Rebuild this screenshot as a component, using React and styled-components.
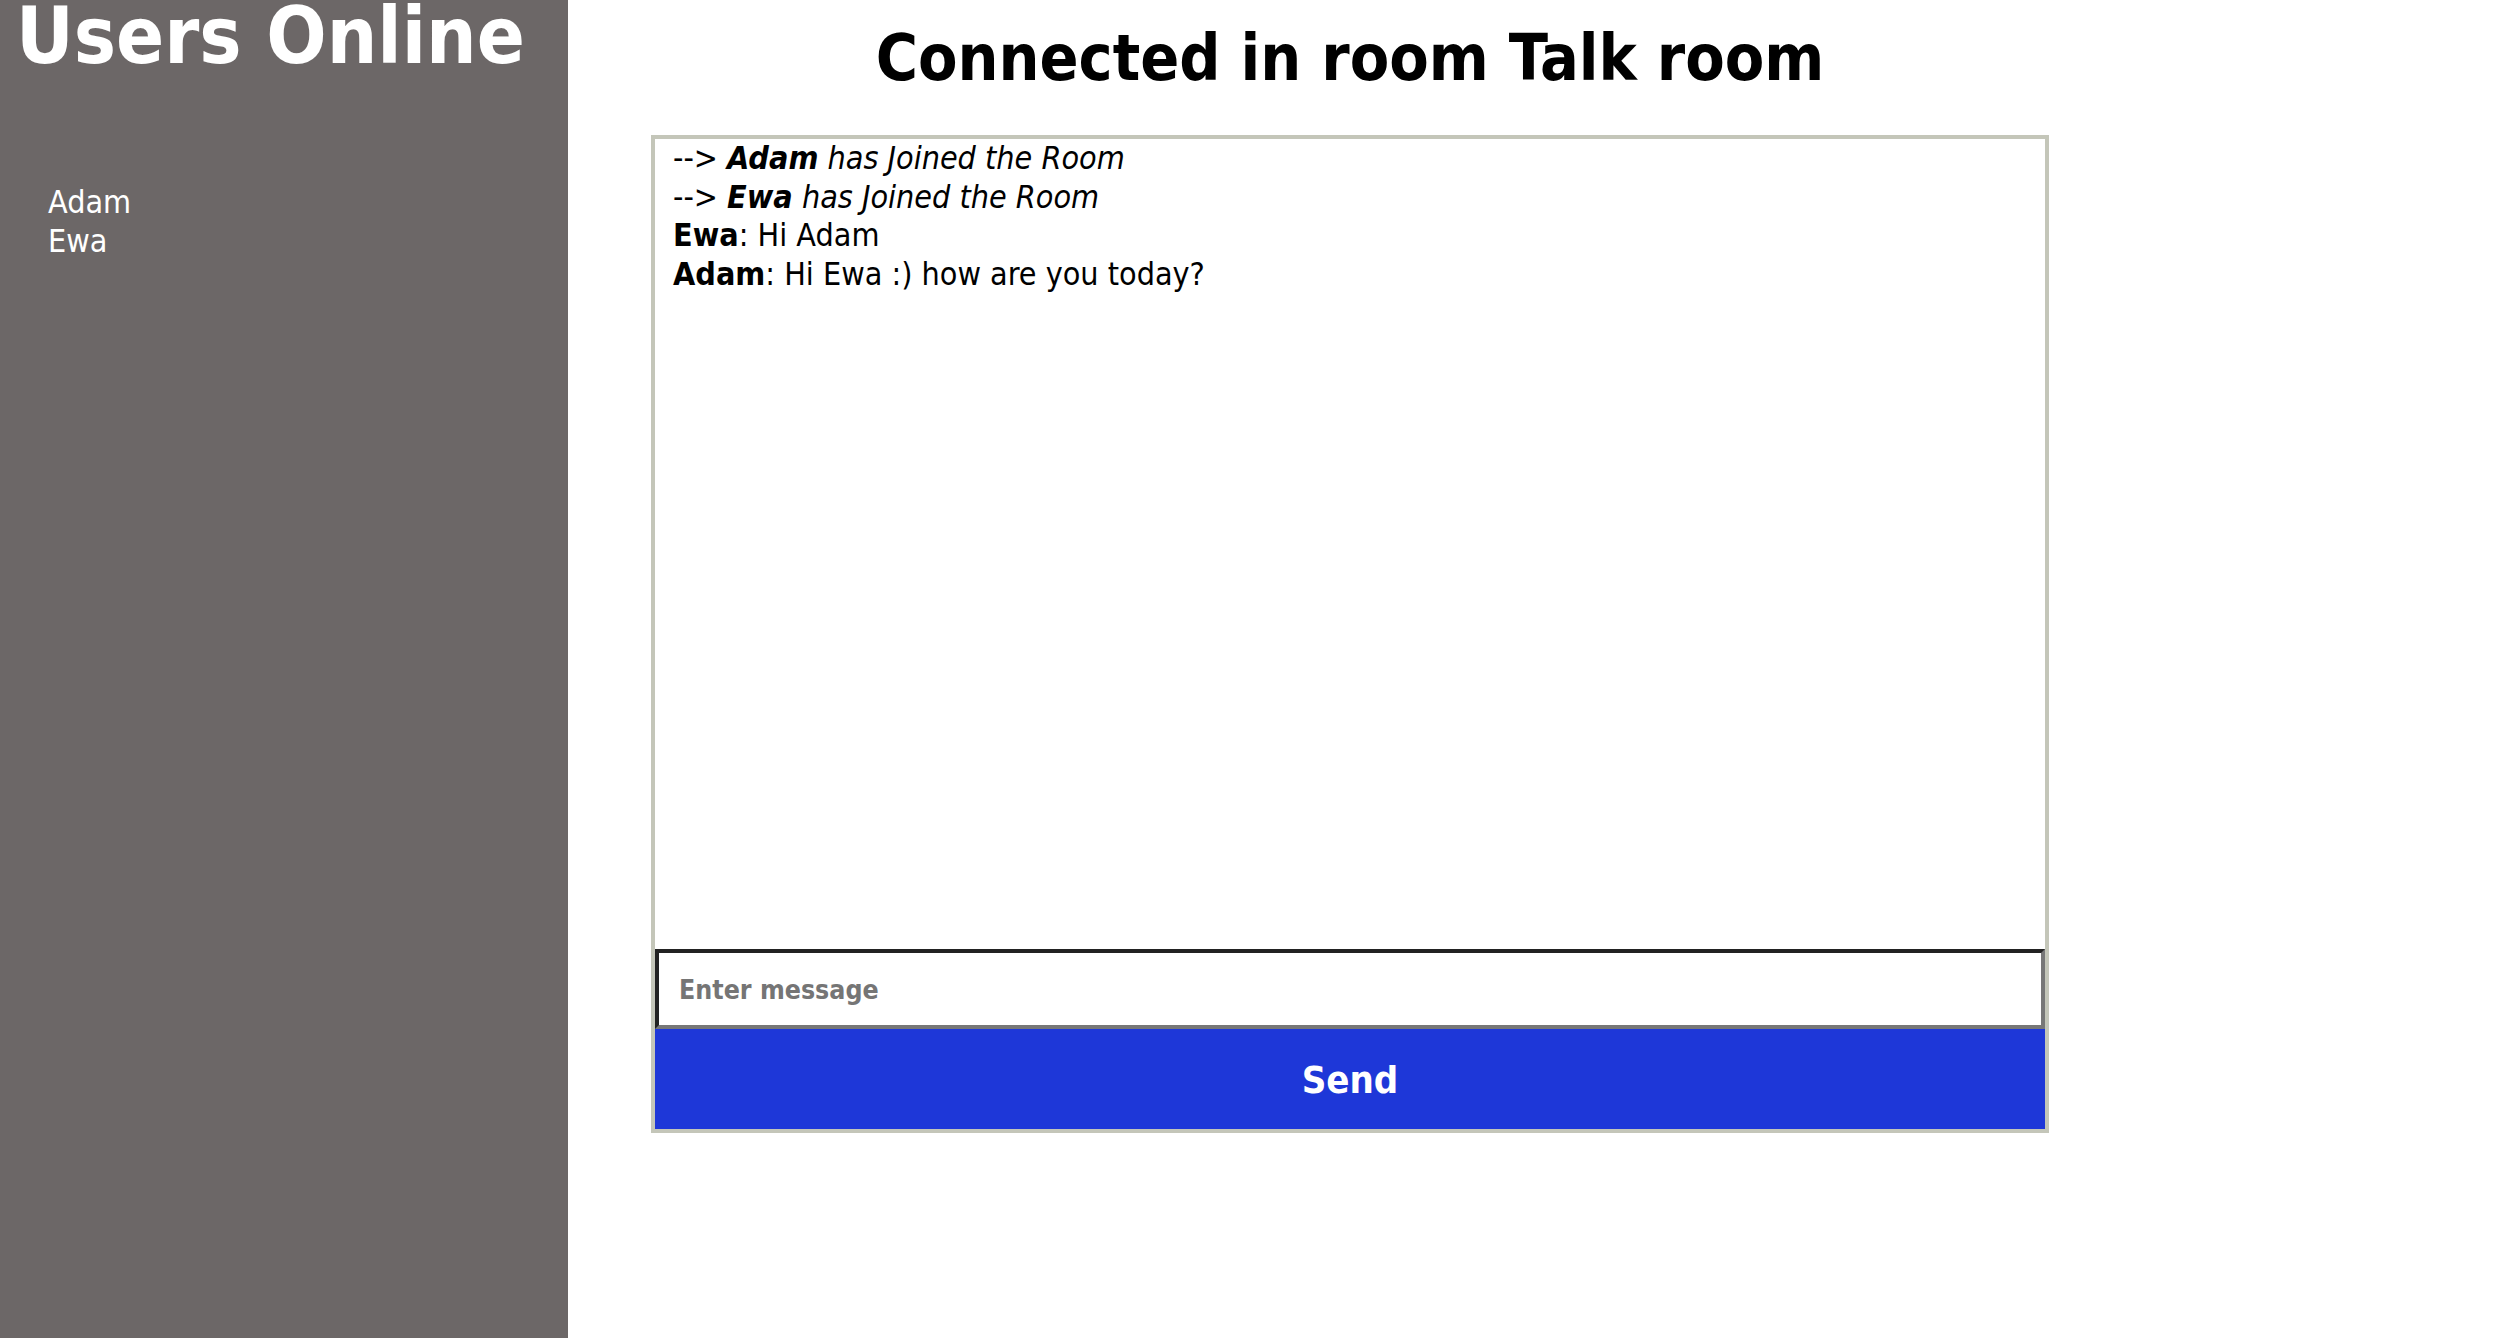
import React from "react";
import styled, { createGlobalStyle } from "styled-components";

const GlobalStyle = createGlobalStyle`
  html, body {
    margin: 0;
    padding: 0;
    background: #ffffff;
  }
  body {
    font-family: "DejaVu Sans Condensed", "DejaVu Sans", Verdana, sans-serif;
    font-stretch: condensed;
    color: #000;
  }
  * { box-sizing: border-box; }
`;

const Page = styled.div`
  display: flex;
  min-height: 100vh;
`;

const Sidebar = styled.aside`
  width: 568px;
  flex: 0 0 568px;
  background: #6c6767;
  color: #ffffff;
`;

const SidebarTitle = styled.h1`
  margin: 0;
  padding: 0 0 0 16px;
  font-size: 79px;
  line-height: 72px;
  font-weight: bold;
  white-space: nowrap;
`;

const UserList = styled.ul`
  list-style: none;
  margin: 111px 0 0 0;
  padding: 0 0 0 48px;
`;

const UserItem = styled.li`
  font-size: 32px;
  line-height: 38.5px;
`;

const Main = styled.main`
  flex: 1;
  padding-left: 83px;
  display: flex;
  flex-direction: column;
`;

const RoomTitle = styled.h1`
  width: 1398px;
  margin: 26px 0 45px 0;
  font-size: 64px;
  line-height: 64px;
  font-weight: bold;
  text-align: center;
  white-space: nowrap;
`;

const ChatBox = styled.section`
  width: 1398px;
  height: 998px;
  border: 4px solid #c4c6b9;
  display: flex;
  flex-direction: column;
  background: #ffffff;
`;

const Messages = styled.div`
  flex: 1;
  padding: 0 0 0 18px;
  overflow: hidden;
`;

const Line = styled.div`
  font-size: 32px;
  line-height: 38.5px;
  white-space: nowrap;
`;

const Notice = styled.em`
  font-style: italic;
`;

const Name = styled.strong`
  font-weight: bold;
`;

const MessageInput = styled.input`
  display: block;
  width: 100%;
  height: 80px;
  margin: 0;
  padding: 0 20px;
  border-style: solid;
  border-width: 4px;
  border-color: #222222 #777777 #777777 #222222;
  font-family: inherit;
  font-stretch: condensed;
  font-size: 26.5px;
  font-weight: bold;
  color: #000;
  background: #ffffff;
  outline: none;

  &::placeholder {
    color: #757575;
    opacity: 1;
  }
`;

const SendButton = styled.button`
  display: block;
  width: 100%;
  height: 100px;
  margin: 0;
  padding: 2px 0 0 0;
  border: none;
  background: #1e37d8;
  color: #ffffff;
  font-family: inherit;
  font-stretch: condensed;
  font-size: 38px;
  font-weight: bold;
  cursor: pointer;
`;

const users = ["Adam", "Ewa"];

export default function App() {
  return (
    <>
      <GlobalStyle />
      <Page>
        <Sidebar>
          <SidebarTitle>Users Online</SidebarTitle>
          <UserList>
            {users.map((u) => (
              <UserItem key={u}>{u}</UserItem>
            ))}
          </UserList>
        </Sidebar>
        <Main>
          <RoomTitle>Connected in room Talk room</RoomTitle>
          <ChatBox>
            <Messages>
              <Line>
                {"--> "}
                <Notice>
                  <Name>Adam</Name> has Joined the Room
                </Notice>
              </Line>
              <Line>
                {"--> "}
                <Notice>
                  <Name>Ewa</Name> has Joined the Room
                </Notice>
              </Line>
              <Line>
                <Name>Ewa</Name>: Hi Adam
              </Line>
              <Line>
                <Name>Adam</Name>: Hi Ewa :) how are you today?
              </Line>
            </Messages>
            <MessageInput type="text" placeholder="Enter message" />
            <SendButton type="button">Send</SendButton>
          </ChatBox>
        </Main>
      </Page>
    </>
  );
}
